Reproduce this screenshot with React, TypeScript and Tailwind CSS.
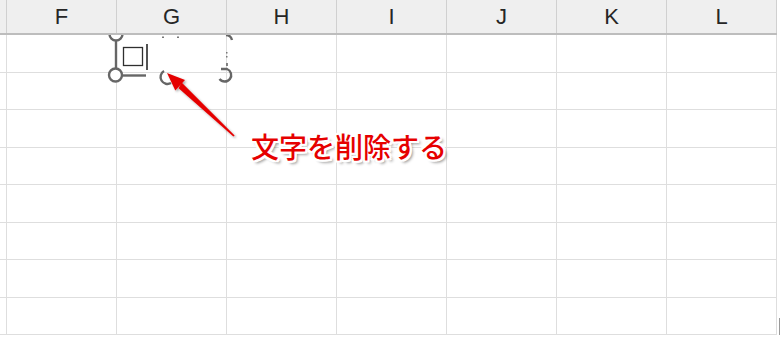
import React from 'react';

const columns = ['F', 'G', 'H', 'I', 'J', 'K', 'L'];
const rowHeights = [38, 37, 38, 37, 38, 37, 38, 37];

// selection handles of the text box, page coordinates offset by the overlay origin (100, 35)
function TextBoxSelection() {
  return (
    <svg
      className="absolute left-[100px] top-[35px] overflow-hidden"
      width="145"
      height="56"
      viewBox="0 0 145 56"
    >
      <g fill="none" stroke="#666" strokeWidth="2.4">
        {/* top-left handle, cut by the header */}
        <circle cx="16" cy="-1" r="6.5" fill="#fff" />
        <line x1="16" y1="5" x2="16" y2="33" />
        {/* bottom-left handle */}
        <circle cx="15.5" cy="40" r="6.5" fill="#fff" />
        <line x1="22" y1="40.5" x2="46" y2="40.5" />
        {/* bottom-middle handle, mostly hidden */}
        <path d="M64 36 A6.5 6.5 0 0 0 71 48" />
        {/* top-right handle */}
        <path d="M126 0 A6.5 6.5 0 0 1 132 5" />
        {/* bottom-right handle */}
        <path d="M121 34 L127 34 A6.5 6.5 0 1 1 119.5 44" />
        <line x1="127" y1="28" x2="127" y2="31" strokeWidth="1.6" />
      </g>
      <g fill="#777">
        <rect x="62" y="1.5" width="2" height="1.5" />
        <rect x="77" y="1.5" width="2" height="1.5" />
        <rect x="126" y="17" width="1.5" height="1.5" />
        <rect x="126" y="21" width="1.5" height="1.5" />
      </g>
      <rect x="23.5" y="12.5" width="19" height="18" fill="none" stroke="#2f2f2f" strokeWidth="1.3" />
      <line x1="47" y1="9" x2="47" y2="35" stroke="#1a1a1a" strokeWidth="1.5" />
    </svg>
  );
}

function Arrow() {
  return (
    <svg className="absolute left-0 top-0" width="783" height="345" viewBox="0 0 783 345">
      <defs>
        <filter id="arrowShadow" x="-20%" y="-20%" width="140%" height="140%">
          <feDropShadow dx="1.5" dy="1.5" stdDeviation="1" floodColor="#000" floodOpacity="0.35" />
        </filter>
      </defs>
      <g fill="#e50000" filter="url(#arrowShadow)">
        <polygon points="234.6,135.4 233.4,136.6 178.6,88.2 181.6,82.4" />
        <polygon points="167,73 185,80 175.3,90.4" />
      </g>
    </svg>
  );
}

export default function App() {
  return (
    <div className="relative w-[783px] h-[345px] overflow-hidden bg-white font-['Liberation_Sans',Arial,sans-serif]">
      <div className="flex w-[783px]">
        <div className="flex flex-col w-[777px]">
          {/* column header */}
          <div className="flex h-[35px] bg-[#efefef] border-b-2 border-[#bdbdbd]">
            <div className="w-[7px] border-r border-[#d0d0d0]" />
            {columns.map((c) => (
              <div
                key={c}
                className="w-[110px] border-r border-[#d0d0d0] flex items-center justify-center text-[22px] text-[#262626] leading-none"
              >
                {c}
              </div>
            ))}
          </div>
          {/* cells */}
          {rowHeights.map((h, i) => (
            <div key={i} className="flex" style={{ height: h }}>
              <div className="w-[7px] border-r border-b border-[#dedede]" />
              {columns.map((c) => (
                <div key={c} className="w-[110px] border-r border-b border-[#dedede]" />
              ))}
            </div>
          ))}
        </div>
        <div className="flex-1 flex flex-col justify-end">
          <div className="ml-[2px] w-px h-[17px] bg-[#9a9a9a]" />
        </div>
      </div>

      <TextBoxSelection />
      <Arrow />

      <span className="absolute left-[251px] top-[132px] text-[28px] leading-none text-[#e60000] font-medium whitespace-nowrap font-['Noto_Sans_CJK_JP',sans-serif] [text-shadow:2px_0_0_#fff,-2px_0_0_#fff,0_2px_0_#fff,0_-2px_0_#fff,2px_2px_0_#fff,-2px_-2px_0_#fff,2px_-2px_0_#fff,-2px_2px_0_#fff,3px_3px_3px_rgba(0,0,0,0.45)]">
        文字を削除する
      </span>
    </div>
  );
}
